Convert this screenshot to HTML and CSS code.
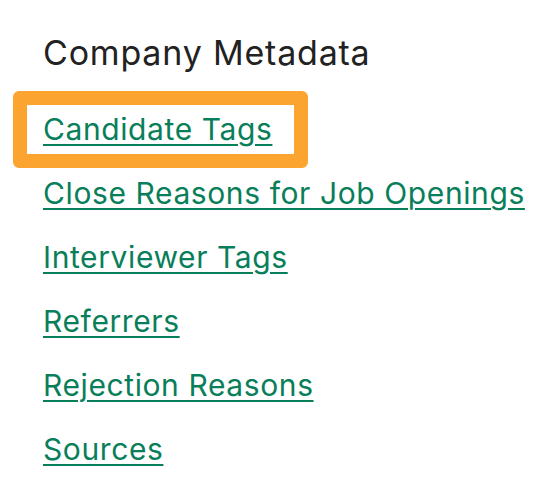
FILE: index.html
```html
<!DOCTYPE html>
<html>
<head>
<meta charset="utf-8">
<link rel="stylesheet" href="styles.css">
</head>
<body>
<div class="panel">
  <h2 class="title">Company Metadata</h2>
  <ul class="links">
    <li class="item"><a class="link link-focus" href="#">Candidate Tags</a></li>
    <li class="item"><a class="link" href="#">Close Reasons for Job Openings</a></li>
    <li class="item"><a class="link" href="#">Interviewer Tags</a></li>
    <li class="item"><a class="link" href="#">Referrers</a></li>
    <li class="item"><a class="link" href="#">Rejection Reasons</a></li>
    <li class="item"><a class="link" href="#">Sources</a></li>
  </ul>
</div>
</body>
</html>
```
FILE: styles.css
```css
html, body {
  margin: 0;
  padding: 0;
  background: #ffffff;
}
body {
  font-family: Inter, "Liberation Sans", sans-serif;
}
.panel {
  padding: 33px 0 0 43px;
}
.title {
  margin: 0;
  font-size: 34px;
  line-height: 40px;
  letter-spacing: 0.8px;
  font-weight: 400;
  color: #222222;
}
.links {
  list-style: none;
  margin: 32px 0 0 0;
  padding: 0;
  display: flex;
  flex-direction: column;
  gap: 15px;
}
.item {
  height: 49px;
  line-height: 49px;
}
.link {
  font-size: 30px;
  letter-spacing: 0.6px;
  color: #087e5a;
  text-decoration: underline;
  text-decoration-thickness: 2px;
  text-underline-offset: 4px;
}
.link-focus {
  display: inline-block;
  margin: -14px 0 0 -30px;
  padding: 0 22px 0 16px;
  border: 14px solid #fba42f;
  border-radius: 6px;
}
```
